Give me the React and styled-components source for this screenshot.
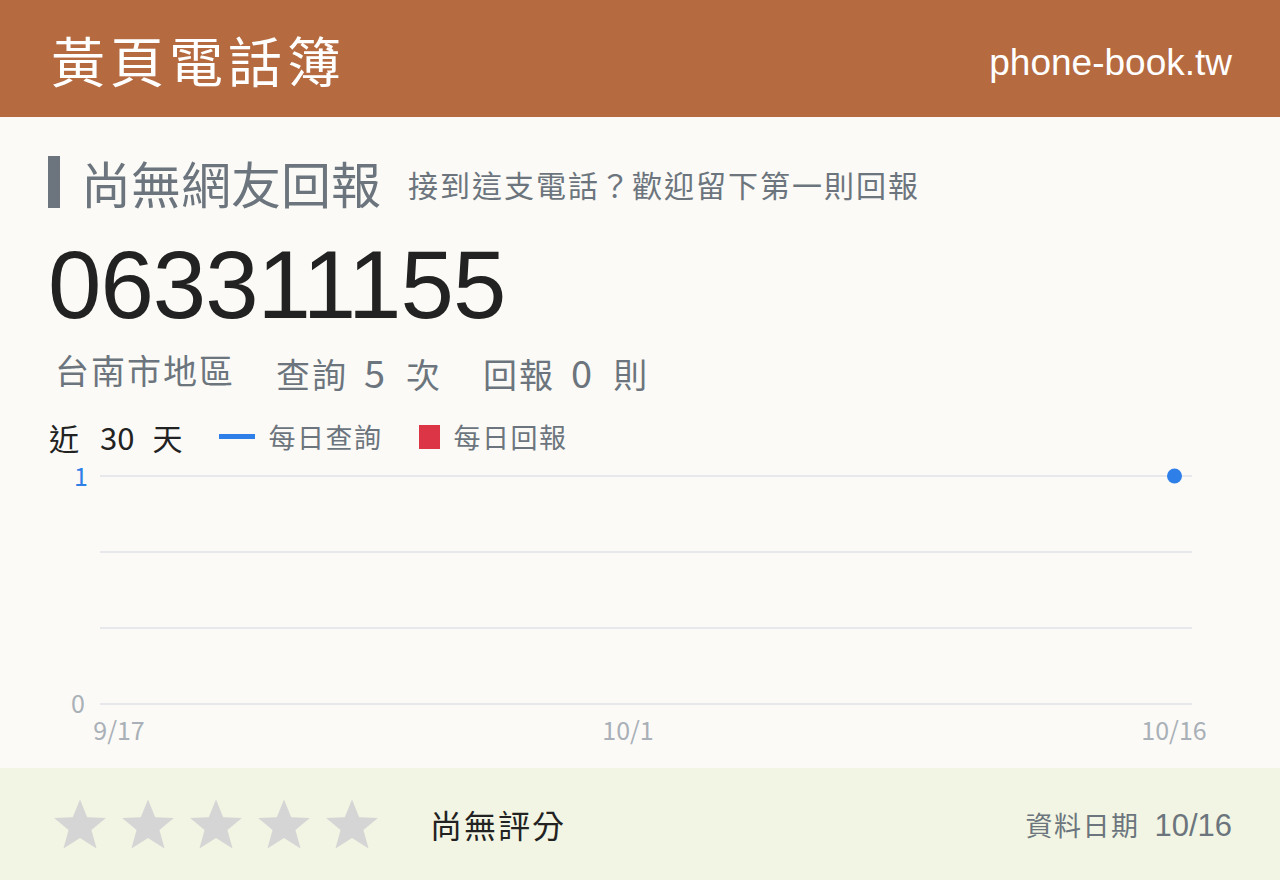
import styled, { createGlobalStyle } from "styled-components";

const GlobalStyle = createGlobalStyle`
  html, body {
    margin: 0;
    padding: 0;
    background: #fbfaf6;
  }
  body {
    font-family: "Noto Sans CJK TC", "Liberation Sans", sans-serif;
  }
`;

const ticks = [
  { label: "9/17", x: 119 },
  { label: "10/1", x: 628 },
  { label: "10/16", x: 1174 },
];

function Star() {
  return (
    <StarIcon viewBox="0 0 24 24">
      <path d="M12 1.5l3.1 7.6 8 .3-6.2 5.2 2.2 7.9L12 18l-7.1 4.5 2.2-7.9L.9 9.4l8-.3z" />
    </StarIcon>
  );
}

function Chart() {
  const left = 100;
  const right = 1192;
  const rows = [20, 96, 172, 248];
  return (
    <ChartBox>
      <svg width="1280" height="300" viewBox="0 0 1280 300">
        {rows.map((y) => (
          <line key={y} x1={left} x2={right} y1={y} y2={y} stroke="#e6e8eb" strokeWidth="2" />
        ))}
        <text x="88" y="30" textAnchor="end" fontSize="25" fill="#2f7fe8">1</text>
        <text x="85" y="257" textAnchor="end" fontSize="25" fill="#a9b0b7">0</text>
        {ticks.map((t) => (
          <text key={t.label} x={t.x} y="284" textAnchor="middle" fontSize="25" fill="#a9b0b7">
            {t.label}
          </text>
        ))}
        <circle cx="1174.5" cy="20" r="7.5" fill="#2f7fe8" />
      </svg>
    </ChartBox>
  );
}

export default function App() {
  return (
    <Page>
      <GlobalStyle />
      <Header>
        <Brand>黃頁電話簿</Brand>
        <Site>phone-book.tw</Site>
      </Header>
      <Main>
        <TitleRow>
          <Title>尚無網友回報</Title>
          <Hint>接到這支電話？歡迎留下第一則回報</Hint>
        </TitleRow>
        <Number>063311155</Number>
        <Stats>
          <Stat>台南市地區</Stat>
          <Stat>
            查詢<Count>5</Count>次
          </Stat>
          <Stat>
            回報<Count>0</Count>則
          </Stat>
        </Stats>
        <LegendRow>
          <Range>
            近<RangeDays>30</RangeDays>天
          </Range>
          <LegendItem>
            <Swatch $color="#2f7fe8" $w={36} $h={5} />
            每日查詢
          </LegendItem>
          <LegendItem>
            <Swatch $color="#dc3545" $w={21} $h={24} />
            每日回報
          </LegendItem>
        </LegendRow>
      </Main>
      <Chart />
      <Footer>
        <Stars>
          {[0, 1, 2, 3, 4].map((i) => (
            <Star key={i} />
          ))}
        </Stars>
        <Rating>尚無評分</Rating>
        <DataDate>
          資料日期<b>10/16</b>
        </DataDate>
      </Footer>
    </Page>
  );
}

const Page = styled.div`
  width: 1280px;
  height: 880px;
  display: flex;
  flex-direction: column;
  background: #fbfaf6;
  overflow: hidden;
`;

const Header = styled.header`
  height: 117px;
  flex: none;
  background: #b56a40;
  color: #fff;
  display: flex;
  align-items: center;
  justify-content: space-between;
  padding: 0 48px 0 51px;
  box-sizing: border-box;
`;

const Brand = styled.div`
  font-size: 54px;
  letter-spacing: 5px;
  line-height: 1;
  margin-top: 2px;
`;

const Site = styled.div`
  font-family: "Liberation Sans", Arial, sans-serif;
  font-size: 37px;
  line-height: 1;
  margin-top: 8px;
`;

const Main = styled.main`
  padding: 39px 48px 0;
  display: flex;
  flex-direction: column;
`;

const TitleRow = styled.div`
  display: flex;
  align-items: center;
  height: 52px;
  border-left: 12px solid #6c757d;
  padding-left: 21px;
`;

const Title = styled.h1`
  margin: 0;
  font-size: 50px;
  font-weight: 400;
  color: #6c757d;
  line-height: 1;
`;

const Hint = styled.span`
  margin-left: 27px;
  font-size: 30px;
  letter-spacing: 2px;
  color: #6c757d;
  line-height: 1;
  margin-top: 4px;
`;

const Number = styled.div`
  margin-top: 29px;
  font-family: "Liberation Sans", Arial, sans-serif;
  font-size: 96px;
  line-height: 96px;
  color: #222;
  letter-spacing: -1px;
`;

const Stats = styled.div`
  margin-top: 20px;
  padding-left: 7px;
  display: flex;
  gap: 41px;
  font-size: 34px;
  letter-spacing: 2px;
  line-height: 1;
  color: #6c757d;
`;

const Stat = styled.span`
  display: flex;
  align-items: baseline;
`;

const Count = styled.span`
  margin: 0 19px 0 16px;
  font-size: 38px;
`;

const LegendRow = styled.div`
  margin-top: 30px;
  display: flex;
  align-items: center;
  line-height: 1;
`;

const Range = styled.span`
  display: flex;
  align-items: baseline;
  font-size: 30px;
  color: #222;
  margin: 0 37px 0 1px;
`;

const RangeDays = styled.span`
  margin: 0 18px 0 21px;
  font-size: 31px;
`;

const LegendItem = styled.span`
  display: flex;
  align-items: center;
  gap: 13px;
  margin-right: 37px;
  font-size: 27px;
  letter-spacing: 1.5px;
  color: #6c757d;
`;

const Swatch = styled.i`
  display: block;
  width: ${(p) => p.$w}px;
  height: ${(p) => p.$h}px;
  background: ${(p) => p.$color};
`;

const ChartBox = styled.div`
  margin-top: 4px;
  height: 300px;
  flex: none;
  svg {
    display: block;
    font-family: "Noto Sans CJK TC", "Liberation Sans", sans-serif;
  }
`;

const Footer = styled.footer`
  margin-top: auto;
  height: 112px;
  flex: none;
  background: #f2f5e3;
  display: flex;
  align-items: center;
  padding: 0 48px 0 52px;
  box-sizing: border-box;
`;

const Stars = styled.div`
  display: flex;
  gap: 12px;
`;

const StarIcon = styled.svg`
  width: 56px;
  height: 56px;
  fill: #d5d5d5;
`;

const Rating = styled.span`
  margin-left: 50px;
  font-size: 32px;
  letter-spacing: 2px;
  color: #222;
`;

const DataDate = styled.span`
  margin-left: auto;
  display: flex;
  align-items: baseline;
  font-size: 27px;
  color: #6c757d;
  letter-spacing: 1.5px;
  b {
    font-family: "Liberation Sans", Arial, sans-serif;
    font-weight: 400;
    font-size: 31px;
    letter-spacing: 0;
    margin-left: 15px;
  }
`;
